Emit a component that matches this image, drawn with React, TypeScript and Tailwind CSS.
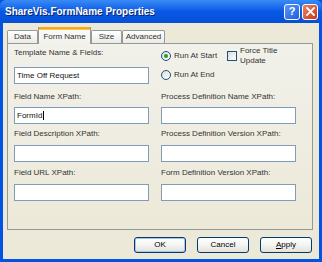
import React from "react";

// Windows XP style property dialog, drawn at roughly 0.75 scale.
const FONT = { fontFamily: '"Liberation Sans", Arial, sans-serif' };

function TextBox({ value, caret }: { value?: string; caret?: boolean }) {
  return (
    <div className="flex h-[17px] w-[135px] items-center border border-[#7F9DB9] bg-white pl-[2px] text-[8px] text-[#111]">
      <span>{value}</span>
      {caret && <span className="ml-[1px] h-[9px] w-px bg-black" />}
    </div>
  );
}

function Label({ children, className = "" }: { children: React.ReactNode; className?: string }) {
  return <div className={`h-[11px] text-[8px] leading-[11px] text-[#333] ${className}`}>{children}</div>;
}

function Radio({ checked, label }: { checked?: boolean; label: string }) {
  return (
    <div className="flex h-[12px] items-center gap-[3px]">
      <span className="flex h-[10px] w-[10px] items-center justify-center rounded-full border border-[#1C5180] bg-gradient-to-br from-[#dcdcd5] to-white">
        {checked && <span className="h-[4px] w-[4px] rounded-full bg-[#21A121]" />}
      </span>
      <span className="text-[8px] text-[#333]">{label}</span>
    </div>
  );
}

function Tab({ label, w }: { label: string; w: string }) {
  return (
    <div
      className={`flex h-[13px] ${w} items-center justify-center rounded-t-[2px] border border-b-0 border-[#919B9C] bg-gradient-to-b from-white to-[#ECEBE6] text-[8px] text-[#333]`}
    >
      {label}
    </div>
  );
}

function Button({ label, primary }: { label: React.ReactNode; primary?: boolean }) {
  return (
    <div
      className={`flex h-[16px] w-[52px] items-center justify-center rounded-[3px] border border-[#003C74] bg-gradient-to-b from-white via-[#F4F4F0] to-[#E3E2DA] text-[8px] text-black ${
        primary ? "shadow-[inset_0_0_0_1px_#A9C3EE]" : ""
      }`}
    >
      {label}
    </div>
  );
}

export default function App() {
  return (
    <div className="flex h-[262px] w-[322px] flex-col bg-[#0054E3]" style={FONT}>
      {/* Title bar */}
      <div className="flex h-[23px] shrink-0 items-center justify-between rounded-t-[6px] bg-gradient-to-b from-[#3A8BF5] via-[#0858E6] to-[#0650D6] pl-[5px] pr-[4px]">
        <span className="text-[10px] font-bold text-white [text-shadow:1px_1px_0_#0A246A]">
          ShareVis.FormName Properties
        </span>
        <div className="flex gap-[2px]">
          <span className="flex h-[16px] w-[16px] items-center justify-center rounded-[3px] border border-white bg-gradient-to-br from-[#5A95F8] to-[#1F5EDD] text-[11px] font-bold leading-none text-white">
            ?
          </span>
          <span className="flex h-[16px] w-[16px] items-center justify-center rounded-[3px] border border-white bg-gradient-to-br from-[#E9845F] to-[#C8350F]">
            <svg width="9" height="9" viewBox="0 0 9 9">
              <path d="M1 1 L8 8 M8 1 L1 8" stroke="white" strokeWidth="1.8" strokeLinecap="square" />
            </svg>
          </span>
        </div>
      </div>

      {/* Body */}
      <div className="mx-[3px] mb-[3px] flex flex-1 flex-col bg-[#ECE9D8]">
        {/* Tabs */}
        <div className="mt-[4px] flex h-[16px] items-end pl-[4px]">
          <Tab label="Data" w="w-[31px]" />
          <div className="relative z-10 mb-[-1px] flex h-[17px] w-[53px] flex-col border-x border-[#919B9C] bg-gradient-to-b from-[#FCFCFE] to-[#F2F1EA]">
            <div className="h-[2px] bg-[#F5A623] shadow-[0_1px_0_#FFC83C]" />
            <div className="flex flex-1 items-center justify-center text-[8px] text-[#333]">Form Name</div>
          </div>
          <Tab label="Size" w="w-[31px]" />
          <Tab label="Advanced" w="w-[43px]" />
        </div>

        {/* Tab page */}
        <div className="ml-[4px] flex h-[187px] w-[306px] flex-col border border-[#919B9C] bg-gradient-to-b from-[#F2F1EA] to-[#ECE9D8] pl-[6px]">
          <div className="flex gap-[12px]">
            <div className="flex flex-col pt-[3px]">
              <Label>Template Name &amp; Fields:</Label>
              <div className="mt-[9px]">
                <TextBox value="Time Off Request" />
              </div>
            </div>
            <div className="flex pt-[6px]">
              <div className="flex w-[66px] flex-col gap-[7px]">
                <Radio checked label="Run At Start" />
                <Radio label="Run At End" />
              </div>
              <div className="-mt-[4px] flex h-[20px] items-center gap-[3px]">
                <span className="h-[10px] w-[10px] border border-[#1C5180] bg-gradient-to-br from-[#dcdcd5] to-white" />
                <span className="text-[8px] leading-[10px] text-[#333]">
                  Force Title
                  <br />
                  Update
                </span>
              </div>
            </div>
          </div>

          <div className="grid grid-cols-[135px_135px] gap-x-[12px]">
            <Label className="mt-[7px]">Field Name XPath:</Label>
            <Label className="mt-[7px]">Process Definition Name XPath:</Label>
            <div className="mt-[5px]">
              <TextBox value="FormId" caret />
            </div>
            <div className="mt-[5px]">
              <TextBox />
            </div>

            <Label className="mt-[4px]">Field Description XPath:</Label>
            <Label className="mt-[4px]">Process Definition Version XPath:</Label>
            <div className="mt-[6px]">
              <TextBox />
            </div>
            <div className="mt-[6px]">
              <TextBox />
            </div>

            <Label className="mt-[5px]">Field URL XPath:</Label>
            <Label className="mt-[5px]">Form Definition Version XPath:</Label>
            <div className="mt-[6px]">
              <TextBox />
            </div>
            <div className="mt-[6px]">
              <TextBox />
            </div>
          </div>
        </div>

        {/* Buttons */}
        <div className="mt-[7px] flex gap-[11px] pl-[131px]">
          <Button label="OK" primary />
          <Button label="Cancel" />
          <Button
            label={
              <span>
                <span className="underline">A</span>pply
              </span>
            }
          />
        </div>
      </div>
    </div>
  );
}
